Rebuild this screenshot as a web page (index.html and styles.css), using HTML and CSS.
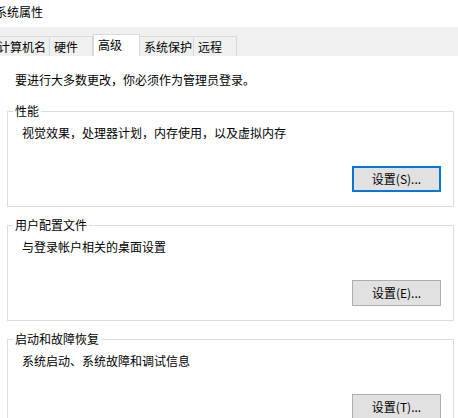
FILE: index.html
```html
<!DOCTYPE html>
<html lang="zh-CN">
<head>
<meta charset="utf-8">
<title>系统属性</title>
<link rel="stylesheet" href="styles.css">
</head>
<body>
<div class="window">
  <div class="titlebar"><span class="title">系统属性</span></div>
  <div class="tabstrip">
    <div class="tab tab-first">计算机名</div>
    <div class="tab">硬件</div>
    <div class="tab selected">高级</div>
    <div class="tab">系统保护</div>
    <div class="tab">远程</div>
  </div>
  <div class="panel">
    <p class="notice">要进行大多数更改，你必须作为管理员登录。</p>
    <fieldset class="group">
      <legend>性能</legend>
      <p class="desc">视觉效果，处理器计划，内存使用，以及虚拟内存</p>
      <div class="actions"><button class="btn default">设置(S)...</button></div>
    </fieldset>
    <fieldset class="group">
      <legend>用户配置文件</legend>
      <p class="desc">与登录帐户相关的桌面设置</p>
      <div class="actions"><button class="btn">设置(E)...</button></div>
    </fieldset>
    <fieldset class="group">
      <legend>启动和故障恢复</legend>
      <p class="desc">系统启动、系统故障和调试信息</p>
      <div class="actions"><button class="btn">设置(T)...</button></div>
    </fieldset>
  </div>
</div>
</body>
</html>
```
FILE: styles.css
```css
html, body {
  margin: 0;
  background: #ffffff;
}
body {
  font-family: "Noto Sans CJK SC", "Microsoft YaHei", sans-serif;
  font-size: 12px;
  color: #000000;
  overflow: hidden;
  width: 458px;
  height: 418px;
}
.window {
  width: 458px;
}
.titlebar {
  height: 27px;
  box-sizing: border-box;
  padding-top: 4px;
  line-height: 16px;
  background: #ffffff;
}
.title {
  display: inline-block;
  margin-left: -5px;
}
.tabstrip {
  height: 29px;
  background: #f0f0f0;
  display: flex;
  align-items: flex-end;
  margin-left: -4px;
}
.tab {
  box-sizing: border-box;
  height: 20px;
  min-width: 43px;
  padding: 0 1px 0 4px;
  border: 1px solid #d9d9d9;
  border-bottom: none;
  line-height: 19px;
  background: #f0f0f0;
  white-space: nowrap;
}
.tab.tab-first {
  padding: 0 3px 0 1px;
}
.tab + .tab {
  border-left: none;
}
.tab.selected {
  height: 22px;
  min-width: 47px;
  background: #ffffff;
  border-left: 1px solid #d9d9d9;
}
.tab.selected + .tab {
  border-left: none;
}
.panel {
  display: flow-root;
  padding: 0 4px 0 7px;
}
.notice {
  margin: 16px 0 15px 8px;
  line-height: 16px;
}
.group {
  margin: 0 0 10px 0;
  padding: 6px 12px 14px 14px;
  border: 1px solid #dcdcdc;
  min-width: 0;
}
.group legend {
  padding: 0 2px;
  margin-left: -9px;
  line-height: 16px;
}
.desc {
  margin: 0;
  line-height: 16px;
}
.actions {
  display: flex;
  justify-content: flex-end;
  margin-top: 25px;
}
.btn {
  box-sizing: border-box;
  width: 89px;
  height: 26px;
  padding: 0;
  border: 1px solid #adadad;
  background: #e1e1e1;
  color: #000000;
  font-family: inherit;
  font-size: 12px;
  line-height: 16px;
}
.btn.default {
  border: 2px solid #0078d7;
}
```
